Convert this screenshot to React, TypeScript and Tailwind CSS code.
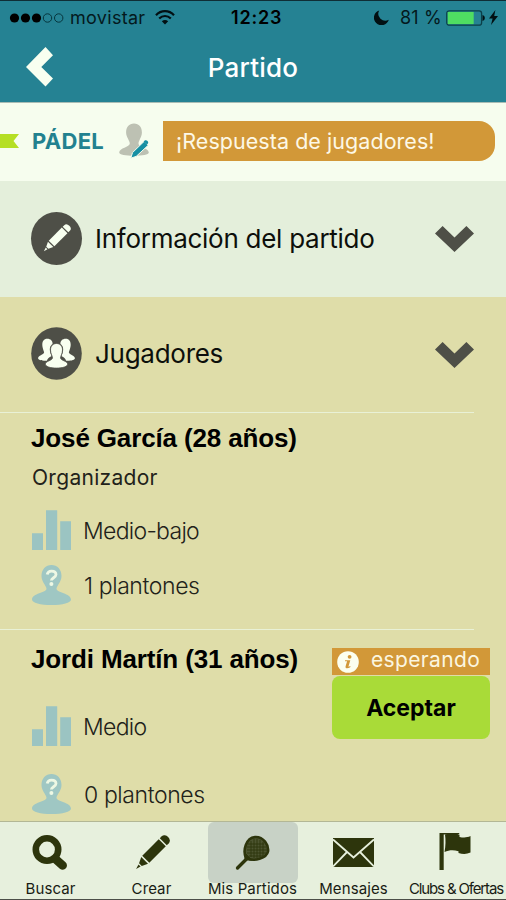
import type { ReactNode } from 'react';
import clsx from 'clsx';

interface Player {
  name: string;
  role?: string;
  level: string;
  missed: string;
  waiting?: boolean;
}

const PLAYERS: Player[] = [
  { name: 'José García (28 años)', role: 'Organizador', level: 'Medio-bajo', missed: '1 plantones' },
  { name: 'Jordi Martín (31 años)', level: 'Medio', missed: '0 plantones', waiting: true },
];

const SIDE_PERSON =
  'M16.2 11.8c3.6 0 5.4 2.3 5.4 5-2.2 1.900-3.300 4.300-2.600 7.800.4 2 1.300 3.300 1.400 4.700-2.200.8-3.900 2.200-4.500 4.500-5.200.2-8.800-.8-8.800-2.500 0-2.600 5.500-3.600 6-5.700.2-1-1.800-4.300-1.800-7.900 0-3.500 1.600-5.900 4.900-5.900z';

function PencilIcon({ className }: { className?: string }) {
  return (
    <svg viewBox="0 0 34 34" className={className} fill="currentColor">
      <g transform="rotate(45 17 17)">
        <path d="M12-1.800a5 4 0 0 1 10 0V1H12z" />
        <path d="M12 2.500h10v23.300H12z" />
        <path d="M12.200 27.400h9.600l-2.900 6h-3.800z" />
        <path d="M15.500 34.600h3L17 39.500z" />
      </g>
    </svg>
  );
}

function Chevron() {
  return (
    <svg viewBox="0 0 39 26" className="mt-[2px] h-[26px] w-[39px]" fill="#4e4f47">
      <path d="M0 7.6 7.6 0 19.5 11.4 31.4 0 39 7.6 19.5 26z" />
    </svg>
  );
}

function GroupIcon() {
  return (
    <svg viewBox="0 0 51 53" className="h-[53px] w-[51px]">
      <ellipse cx="25.500" cy="26.500" rx="25.300" ry="26.300" fill="#4e4f47" />
      <g fill="#f8fff0">
        <path d={SIDE_PERSON} />
        <path transform="translate(51 0) scale(-1 1)" d={SIDE_PERSON} />
        <path
          stroke="#4e4f47"
          strokeWidth=".8"
          d="M25.500 16.500c3.900 0 6 2.800 6 6.500 0 3.700-2 6.200-2 7.800 0 2.800 7.200 3.300 7.200 6.300 0 2.500-5 4-11.200 4s-11.200-1.500-11.200-4c0-3 7.200-3.500 7.200-6.300 0-1.600-2-4.100-2-7.800 0-3.700 2.100-6.500 6-6.500z"
        />
      </g>
    </svg>
  );
}

function LevelIcon() {
  return (
    <svg viewBox="0 0 39 40" className="h-10 w-[39px]" fill="#9bc4c2">
      <path d="M0 23.300h11V40H0zM14 .3h11.200V40H14zM28.200 11.300H39V40H28.200z" />
    </svg>
  );
}

function MissedIcon() {
  return (
    <svg viewBox="0 0 39 40" className="h-10 w-[39px]">
      <path
        fill="#9fc7c3"
        d="M19.500 0c5.900 0 10 4.600 10 11 0 6-5 9.800-5 13 0 3.200 14.500 4.500 14.500 10.500 0 3.500-8.500 5.500-19.500 5.500S0 38 0 34.500C0 28.500 14.500 27.200 14.500 24c0-3.200-5-7-5-13 0-6.400 4.100-11 10-11z"
      />
      <path d="M15.200 9.600c.4-2.400 2-3.500 4.300-3.500 2.700 0 4.500 1.300 4.500 3.500 0 3.100-4.600 3.200-4.600 6" fill="none" stroke="#eef8e4" strokeWidth="2.800" />
      <circle cx="19.400" cy="19" r="2" fill="#eef8e4" />
    </svg>
  );
}

function StatusBar() {
  return (
    <div className="flex h-[31px] items-center pl-[9px] pr-[8px] pt-[2px] text-[18px] leading-none text-[#04191d]">
      <svg viewBox="0 0 55 10" className="h-[10px] w-[55px] shrink-0">
        <g fill="#000">
          <circle cx="5.500" cy="5" r="4.600" />
          <circle cx="16.500" cy="5" r="4.600" />
          <circle cx="27.500" cy="5" r="4.600" />
        </g>
        <g fill="none" stroke="#06353d" strokeWidth="1">
          <circle cx="38.500" cy="5" r="4.200" />
          <circle cx="49.700" cy="5" r="4.200" />
        </g>
      </svg>
      <span className="ml-[6px] w-[85px] tracking-[0.3px]">movistar</span>
      <svg viewBox="0 0 20 15" className="h-[15px] w-[20px] shrink-0" fill="none" stroke="#021013" strokeWidth="2.200">
        <path d="M1 5.300C6-.2 14-.2 19 5.300" />
        <path d="M4.200 8.600c3.400-3.500 8.200-3.500 11.600 0" />
        <path d="M6.800 11.200c2-1.700 4.400-1.700 6.400 0L10 14.400z" fill="#021013" stroke="none" />
      </svg>
      <span className="ml-[56px] w-[54px] font-semibold tracking-[0.8px] text-black">12:23</span>
      <svg viewBox="0 0 15 15" className="ml-[89px] h-[15px] w-[15px] shrink-0" fill="#021013">
        <path d="M5.200.4A7.600 7.600 0 1 0 14.800 9.800 7 7 0 0 1 5.200.4z" />
      </svg>
      <span className="ml-[11px] w-[46px] whitespace-nowrap tracking-[0.2px]">81 %</span>
      <svg viewBox="0 0 39 16" className="h-4 w-[39px] shrink-0">
        <rect x=".8" y=".8" width="34.800" height="14.400" rx="2.500" fill="none" stroke="#0b3f49" strokeWidth="1.300" />
        <path d="M1.700 1.900h26v12.200h-26z" fill="#4fdd62" />
        <path d="M36.500 5c1.400.3 2.300 1.500 2.300 3s-.9 2.700-2.300 3z" fill="#021013" />
      </svg>
      <svg viewBox="0 0 9 15" className="ml-[4px] h-[15px] w-[9px] shrink-0" fill="#021013">
        <path d="M6.400 0 0 8.400h3.600L2 15l7-8.900H5.200z" />
      </svg>
    </div>
  );
}

function Header() {
  return (
    <header className="h-[103px] border-b border-[#a9bcb4] border-t border-t-[#0f2d35] bg-[#258293]">
      <StatusBar />
      <div className="grid h-[70px] grid-cols-[1fr_auto_1fr] items-center">
        <svg viewBox="0 0 27 40" className="ml-[26px] h-10 w-[27px]" fill="#f8fff0">
          <path d="M19.500 0 27 8.200 15.300 20 27 31.600 19.500 39.500 0 20z" />
        </svg>
        <h1 className="pt-[1px] text-[26px] font-medium tracking-[0.2px] text-white">Partido</h1>
      </div>
    </header>
  );
}

function SportStrip() {
  return (
    <div className="flex h-[78px] items-center bg-[#f6fdee] pb-[2px]">
      <svg viewBox="0 0 19 14" className="h-[14px] w-[19px]" fill="#b5df24">
        <path d="M0 0h19l-5.500 7 5.500 7H0z" />
      </svg>
      <span className="ml-[13px] w-[87px] text-[22px] font-bold tracking-[0.3px] text-[#22818f]">PÁDEL</span>
      <svg viewBox="0 0 30 36" className="h-9 w-[30px]">
        <path
          fill="#bdc1b3"
          d="M15 .5c5 0 7.900 3.700 7.900 9 0 4.500-3.400 8-3.400 11 0 4.500 10.300 4.500 10.300 9 0 2.300-6.500 3.300-14.800 3.300S.2 31.800.2 29.500c0-4.500 10.600-5.500 10.600-9 0-3-3.700-6.500-3.700-11 0-5.300 2.900-9 7.900-9z"
        />
        <path d="m11.800 35.200 1.700-5.600L25.200 18.300l4 4L17.200 33.400z" fill="#168fa3" stroke="#f6fdee" strokeWidth="1" />
        <path d="m24.700 18.500 1-.9c1.800-1.400 4.400 1 3.200 3l-.9 1z" fill="#168fa3" />
      </svg>
      <div className="ml-[14px] flex h-10 w-[332px] items-center rounded-r-[16px] bg-[#d29838] pl-[13px] text-[21.5px] tracking-[0.05px] text-[#fdf8e6]">
        ¡Respuesta de jugadores!
      </div>
    </div>
  );
}

interface SectionProps {
  icon: ReactNode;
  title: string;
  className?: string;
}

function SectionRow({ icon, title, className }: SectionProps) {
  return (
    <div className={clsx('flex items-center pb-[2px] pl-[31px] pr-8', className)}>
      {icon}
      <span className="ml-[13px] flex-1 whitespace-nowrap text-[26px] tracking-[-0.27px] text-[#0d0f0b]">{title}</span>
      <Chevron />
    </div>
  );
}

function WaitingBox() {
  return (
    <div className="mr-4 mt-[18px] w-[158px]">
      <div className="flex h-[27px] items-center bg-[#d29838] pl-[5px] text-[#fbf6e0]">
        <svg viewBox="0 0 22 22" className="h-[22px] w-[22px]">
          <circle cx="11" cy="11" r="10.800" fill="#fcffef" />
          <g fill="#d29838">
            <circle cx="12.600" cy="5.800" r="1.900" />
            <path d="M8 9.200h5.300l-1.900 6.500 2.100-.7-.3 1.200c-2.500 1.800-5.300 1.500-4.600-.9l1.500-5H8z" />
          </g>
        </svg>
        <span className="ml-[12px] pb-[3px] text-[21px] tracking-[0.35px]">esperando</span>
      </div>
      <button className="mt-[1px] h-[63px] w-full rounded-[8px] bg-[#a9db38] pt-[2px] text-[23px] font-bold text-black">Aceptar</button>
    </div>
  );
}

function PlayerCard({ player }: { player: Player }) {
  return (
    <article>
      <div className="mr-8 h-px bg-[#e9f1d6]" />
      <div className="flex justify-between">
        <div className={clsx('pl-8', player.role ? 'h-[216px] pt-[9px]' : 'h-[191px] pt-[13px]')}>
          <h2 className="-ml-px h-8 whitespace-nowrap font-['Liberation_Sans',Arial,sans-serif] text-[26px] font-bold leading-8 tracking-[-0.14px] text-black">
            {player.name}
          </h2>
          {player.role && (
            <p className="mt-[9px] h-[30px] text-[21px] leading-[30px] tracking-[0.3px] text-[#22221a]">{player.role}</p>
          )}
          <div
            className={clsx(
              'flex flex-col text-[23px] font-light text-[#22221a]',
              player.role ? 'mt-[17px] gap-[15px]' : 'mt-[31px] gap-[28px]',
            )}
          >
            <div className="flex h-10 items-center">
              <LevelIcon />
              <span className="ml-[12px] pt-[2px] tracking-[-0.7px]">{player.level}</span>
            </div>
            <div className="flex h-10 items-center">
              <MissedIcon />
              <span className="ml-[13px] pt-[2px] tracking-[-0.4px]">{player.missed}</span>
            </div>
          </div>
        </div>
        {player.waiting && <WaitingBox />}
      </div>
    </article>
  );
}

interface TabProps {
  label: string;
  children: ReactNode;
  active?: boolean;
  labelClass?: string;
}

function Tab({ label, children, active, labelClass = 'tracking-[0.1px]' }: TabProps) {
  return (
    <div className="flex w-[101px] flex-col items-center">
      <div
        className={clsx(
          'flex h-[61px] w-[90px] items-center justify-center rounded-[6px] text-[#2d350c]',
          active && 'bg-[#c8d2c6]',
        )}
      >
        {children}
      </div>
      <span className={clsx('whitespace-nowrap text-[15px] leading-[11px] text-[#191c14]', labelClass)}>{label}</span>
    </div>
  );
}

function TabBar() {
  return (
    <nav className="flex h-[79px] border-b border-t border-b-[#4c4e48] border-t-[#b3b795] bg-[#e7f0dd]">
      <Tab label="Buscar">
        <svg viewBox="0 0 36 36" className="mr-[2px] h-9 w-9" fill="none" stroke="currentColor">
          <circle cx="15" cy="14.500" r="11.200" strokeWidth="6.600" />
          <path d="m24 24.500 6.700 6" strokeWidth="8.500" strokeLinecap="round" />
        </svg>
      </Tab>
      <Tab label="Crear">
        <PencilIcon className="h-[34px] w-[34px] overflow-visible" />
      </Tab>
      <Tab label="Mis Partidos" active>
        <svg viewBox="0 0 36 36" className="mr-[2px] h-9 w-9" fill="none" stroke="currentColor">
          <path d="M12 23.500C8.500 15 12 3 21 2c8.500-.5 14 8 13 14.500-1.500 7-14 10-21 7z" fill="#4c5430" strokeWidth="2.600" />
          <path d="M17 6v16M20 4v19M23 4v19M26 5v17M29 7v14M14 9h16M13 12h19M13 15h20M13 18h19M15 21h14" strokeWidth=".9" />
          <path d="m11 18 .3 6.500 6.500.6z" fill="currentColor" strokeWidth="1" />
          <path d="M12.500 24 3.500 33" strokeWidth="3.300" strokeLinecap="round" />
        </svg>
      </Tab>
      <Tab label="Mensajes">
        <svg viewBox="0 0 41 29" className="mr-px h-[29px] w-[41px]">
          <rect width="41" height="29" fill="currentColor" />
          <path d="m0 1.500 20.500 18L41 1.500M0 28.500l14-14.500M41 28.500 27 14" fill="none" stroke="#e7f0dd" strokeWidth="1.800" />
        </svg>
      </Tab>
      <Tab label="Clubs & Ofertas" labelClass="ml-[3px] tracking-[-1.15px]">
        <svg viewBox="0 0 32 39" className="h-[39px] w-8 -translate-y-px" fill="currentColor">
          <path d="M.5 1h20l-.5 1-15.300.6V38H.5z" />
          <path d="M6 2.500c6-1.700 9-1.400 14.500.3V5c4 .8 7.500.8 11-.9v16.500c-4 1.700-8 1.600-12 .3v-1.700C14 17.500 10 18 5.500 20c1.200-6 1.300-12 .5-17.500z" />
        </svg>
      </Tab>
    </nav>
  );
}

export default function App() {
  return (
    <div className="flex h-[900px] w-[506px] flex-col overflow-hidden bg-[#dfdda9] font-['Inter',sans-serif]">
      <Header />
      <SportStrip />
      <SectionRow
        title="Información del partido"
        className="h-[116px] bg-[#e4efdb]"
        icon={
          <div className="flex h-[53px] w-[51px] items-center justify-center rounded-[50%] bg-[#4e4f47] text-[#f8fff0]">
            <PencilIcon className="h-[27px] w-[27px] overflow-visible" />
          </div>
        }
      />
      <SectionRow title="Jugadores" className="h-[115px]" icon={<GroupIcon />} />
      {PLAYERS.map((p) => (
        <PlayerCard key={p.name} player={p} />
      ))}
      <TabBar />
    </div>
  );
}
